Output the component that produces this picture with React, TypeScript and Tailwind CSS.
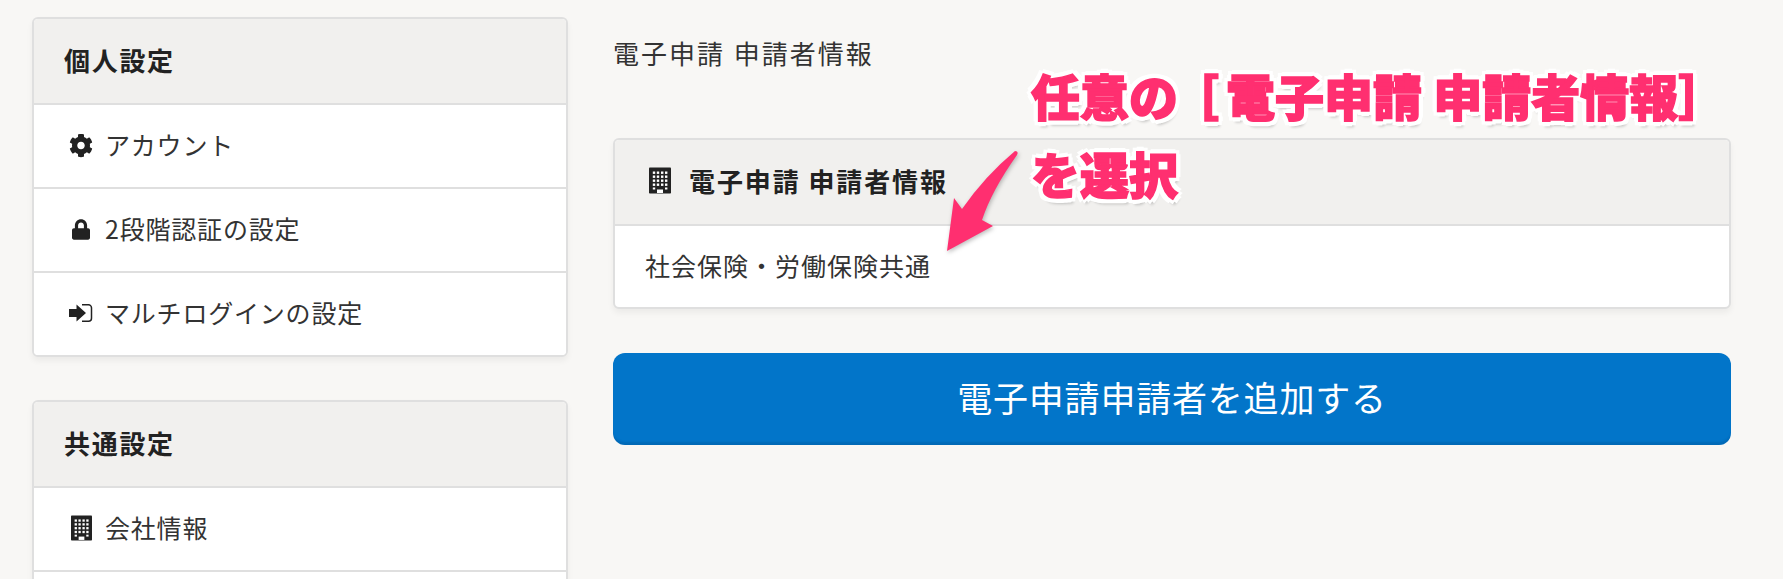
import React from "react";
import { FaCog, FaLock } from "react-icons/fa";

const jp = "font-['Noto_Sans_CJK_JP','Noto_Sans',sans-serif]";

function SignIn() {
  return (
    <svg viewBox="0 0 24 18" className="w-[24px] h-[18px]">
      <path d="M0 5h7.500V.5L17 9l-9.500 8.500V13H0z" fill="#222" />
      <path d="M13 .8h6.500a3 3 0 0 1 3 3v10.400a3 3 0 0 1-3 3H13" fill="none" stroke="#222" strokeWidth="1.500" />
    </svg>
  );
}

function Building({ className }: { className: string }) {
  const cells: React.ReactNode[] = [];
  const xs = [3.8, 7.8, 12, 16];
  for (let r = 0; r < 4; r++) {
    xs.forEach((x) => {
      cells.push(<rect key={`${r}-${x}`} x={x} y={4 + r * 4} width="2.400" height="2.400" fill="#fff" />);
    });
  }
  return (
    <svg viewBox="0 0 22 26" className={className}>
      <rect width="22" height="26" rx="0.800" fill="#222" />
      {cells}
      <rect x="3.800" y="20" width="2.400" height="2" fill="#fff" />
      <rect x="16" y="20" width="2.400" height="2" fill="#fff" />
      <rect x="8" y="22" width="6" height="3.500" fill="#fff" />
    </svg>
  );
}

function Row({ icon, label }: { icon: React.ReactNode; label: string }) {
  return (
    <div className="h-[84px] flex items-center pl-[35px] pb-[2px] border-t-2 border-[#dfdfdf] bg-white text-[25px] text-[#333]">
      <span className="w-[24px] flex justify-center shrink-0">{icon}</span>
      <span className="ml-[12px] tracking-[0.800px]">{label}</span>
    </div>
  );
}

function Card({ title, children, className }: { title: string; children: React.ReactNode; className: string }) {
  return (
    <section className={`border-2 border-[#dfdfdf] rounded-[6px] overflow-hidden bg-white shadow-[0_4px_6px_rgba(0,0,0,0.05)] ${className}`}>
      <h2 className="h-[84px] flex items-center pl-[30px] pb-[3px] bg-[#f1f0ee] text-[26px] font-bold text-[#222] tracking-[1.700px]">{title}</h2>
      {children}
    </section>
  );
}

const note =
  "absolute text-[49px] leading-none font-black text-[#ff2f70] whitespace-nowrap [-webkit-text-stroke:1.5px_#ff2f70] [text-shadow:5px_0_0_#fff,-5px_0_0_#fff,0_5px_0_#fff,0_-5px_0_#fff,4px_4px_0_#fff,-4px_4px_0_#fff,4px_-4px_0_#fff,-4px_-4px_0_#fff,2px_6px_3px_rgba(0,0,0,0.2)]";

export default function App() {
  return (
    <div className={`relative h-[579px] overflow-hidden bg-[#f8f7f5] flex items-start pt-[17px] pl-[32px] pr-[52px] gap-[45px] ${jp}`}>
      <aside className="w-[536px] shrink-0">
        <Card title="個人設定" className="">
          <Row icon={<FaCog className="w-[25px] h-[25px] text-[#222]" />} label="アカウント" />
          <Row icon={<FaLock className="w-[18px] h-[21px] text-[#222]" />} label="2段階認証の設定" />
          <Row icon={<SignIn />} label="マルチログインの設定" />
        </Card>
        <Card title="共通設定" className="mt-[43px]">
          <Row icon={<Building className="w-[21px] h-[26px]" />} label="会社情報" />
          <div className="h-[20px] border-t-2 border-[#dfdfdf]" />
        </Card>
      </aside>
      <main className="flex-1 min-w-0">
        <p className="mt-[17px] text-[26px] leading-[38px] tracking-[2px] [word-spacing:1px] text-[#333]">電子申請 申請者情報</p>
        <section className="mt-[66px] border-2 border-[#dfdfdf] rounded-[6px] overflow-hidden bg-white shadow-[0_4px_6px_rgba(0,0,0,0.05)]">
          <h2 className="h-[84px] flex items-center pl-[34px] pb-[3px] bg-[#f1f0ee] text-[26px] font-bold text-[#222] tracking-[1.900px]">
            <Building className="w-[22px] h-[27px] shrink-0" />
            <span className="ml-[18px]">電子申請 申請者情報</span>
          </h2>
          <div className="h-[83px] flex items-center pl-[30px] pb-[1px] border-t-2 border-[#dfdfdf] text-[25px] tracking-[1px] text-[#333]">社会保険・労働保険共通</div>
        </section>
        <button className="mt-[44px] w-full h-[92px] pb-[3px] rounded-[12px] bg-[#0275c9] shadow-[inset_0_-4px_2px_-1px_rgba(0,60,110,0.2)] text-white text-[35px] tracking-[0.800px]">電子申請申請者を追加する</button>
      </main>
      <div className={`${note} left-[1031px] top-[70px]`}>
        任意<span className="tracking-[-8px]">の</span><span className="tracking-[7px]">［</span>電子申請 申請者情報］
      </div>
      <div className={`${note} left-[1031px] top-[148px]`}>を選択</div>
      <svg viewBox="0 0 100 120" className="absolute left-[930px] top-[140px] w-[100px] h-[120px] drop-shadow-[1px_2px_2px_rgba(0,0,0,0.25)]">
        <path d="M85 11 Q89 11 87 15 Q62 50 52 80 L63 86 L17 111 L24 58 L32 69 Q55 36 85 11 Z" fill="#ff2f70" />
      </svg>
    </div>
  );
}
